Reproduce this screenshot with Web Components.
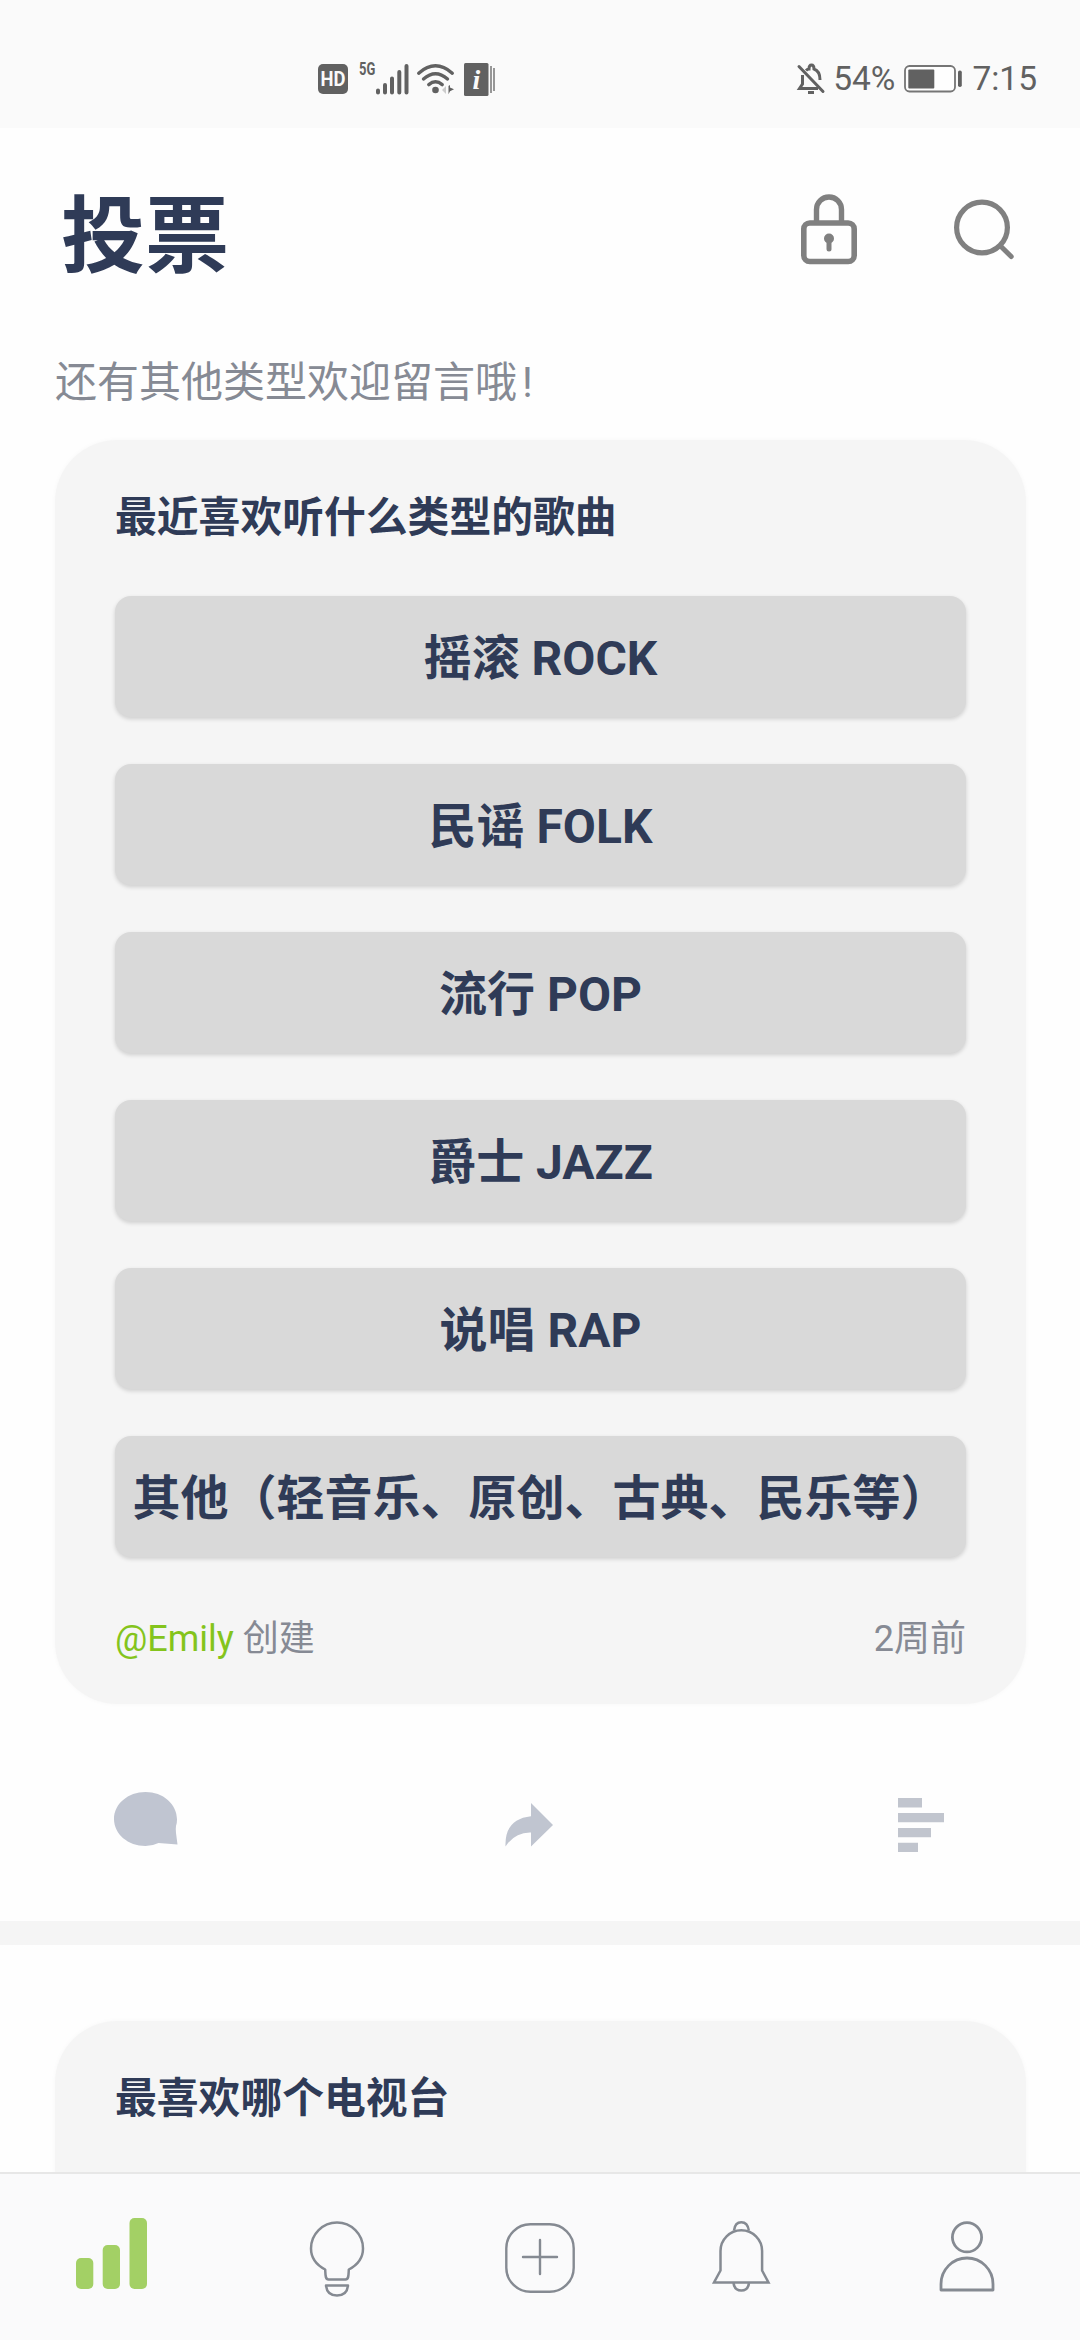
<!DOCTYPE html>
<html lang="zh-CN">
<head>
<meta charset="utf-8">
<title>投票</title>
<style>
  html, body { margin: 0; padding: 0; }
  body {
    width: 1080px; height: 2340px; overflow: hidden; background: #fefefe;
    font-family: Roboto, "Noto Sans CJK SC", sans-serif;
    --ink: #2f3b57; --muted: #868a94; --panel: #f5f5f5; --accent: #84c41c;
  }
</style>
</head>
<body>
<poll-app></poll-app>
<script>
const define = (name, html) => {
  const template = document.createElement('template');
  template.innerHTML = html;
  customElements.define(name, class extends HTMLElement {
    constructor() {
      super();
      this.attachShadow({ mode: 'open' }).append(template.content.cloneNode(true));
    }
  });
};

/* name: [width, height, markup] */
const ICONS = {
  hd: [30, 30, `<rect width="30" height="30" rx="5" fill="#616161"/><text x="15" y="22" text-anchor="middle" textLength="25" lengthAdjust="spacingAndGlyphs" font-family="Roboto" font-weight="700" font-size="19.500" fill="#fafafa">HD</text>`],
  signal: [34, 32, `<g stroke="#616161" stroke-width="4" stroke-linecap="round"><path d="M3 27.500v2M10 22v7.500M17 15.500v14M24.300 9v20.500M31.500 3v26.500"/></g>`],
  wifi: [40, 34, `<g fill="none" stroke="#616161" stroke-width="3.400" stroke-linecap="round"><path d="M2.700 11.200Q19.500-3.500 36.300 11.200M7.500 17Q19.500 6.500 31.500 17M12.800 22.600Q19.500 17 26.200 22.600"/></g><circle cx="19.500" cy="28" r="3.300" fill="#616161"/><path d="M30 24v8l-4-4z" fill="#ccc"/><path d="M32.500 24l1.500-1v2.500l4 1.800-4 2-1.500 3z" fill="#616161"/>`],
  info: [31, 33, `<rect width="24.500" height="33" rx="1.500" fill="#616161"/><path d="M27 3v27M30 5v23" stroke="#777" stroke-width="1.500"/><text x="12.300" y="25.500" text-anchor="middle" font-family="Liberation Serif" font-weight="700" font-style="italic" font-size="28" fill="#fafafa">i</text>`],
  mute: [28, 32, `<g fill="none" stroke="#616161" stroke-width="3"><path d="M2 3.500L26 28.500" stroke-linecap="round"/><path d="M9 7.500Q10.500 6 12 6Q12 2 14.500 2T17 6Q23 8 23 17M5.500 12V21L2.500 25.500H21"/><path d="M11 29.500h6"/></g>`],
  battery: [59, 28, `<rect x="1" y="1" width="50" height="25.500" rx="4.500" fill="#fefefe" stroke="#757575" stroke-width="1.800"/><rect x="4.300" y="4.500" width="26" height="19" rx="1" fill="#616161"/><rect x="54" y="5.500" width="3.800" height="16.500" rx="1.800" fill="#616161"/>`],
  lock: [56, 70, `<g fill="none" stroke="#808080"><rect x="2.800" y="29" width="50.400" height="38.500" rx="6" stroke-width="5.600"/><path d="M15.500 28V15.500a12.500 12.500 0 0 1 25 0V28" stroke-width="5.400"/></g><circle cx="28" cy="44.500" r="5" fill="#808080"/><path d="M28 45v10" stroke="#808080" stroke-width="5" stroke-linecap="round"/>`],
  search: [60, 60, `<g fill="none" stroke="#808080"><circle cx="28" cy="28.500" r="25.400" stroke-width="5.200"/><path d="M46.500 47L57.200 57.500" stroke-width="5" stroke-linecap="round"/></g>`],
  comment: [64, 54, `<path d="M31.500 0C49 0 63 12 63 27.500Q63 31.500 62 34Q61.500 37 62 41L63.500 52.500L44.500 51Q38.500 54 31.500 54C14 54 0 42 0 27S14 0 31.500 0z" fill="#c0c5d1"/>`],
  share: [48, 44, `<path d="M26 0L48 22 26 43.500V29.500Q10 29 .500 43.500Q-.500 16 26 13.200z" fill="#c0c5d0"/>`],
  list: [46, 54, `<path d="M0 0h24v9.500H0zM0 15h46v9.200H0zM0 30h33v9.200H0zM0 44.800h20V54H0z" fill="#c1c5ce"/>`],
  chart: [71, 71, `<g fill="#a3d065"><rect y="40" width="17.300" height="31" rx="5"/><rect x="26.700" y="27" width="17.300" height="44" rx="5"/><rect x="53.500" y="0" width="17.500" height="71" rx="5"/></g>`],
  bulb: [56, 76, `<g fill="none" stroke="#858a92" stroke-width="2.500" stroke-linejoin="round"><path d="M16.200 48.500C8.500 44.500 2 37.500 2 27.500a26 26 0 0 1 52 0C54 37.500 47.500 44.500 39.800 48.500C39.500 53 40 58.500 36.500 58.500H19.500C16 58.500 16.500 53 16.200 48.500z"/><path d="M17 64.500H39Q38 74.500 28 74.500T17 64.500z"/></g>`],
  plus: [70, 70, `<g fill="none" stroke="#858a92" stroke-width="2.400"><rect x="1.300" y="1.300" width="67.400" height="67.400" rx="24"/><path d="M18 34H52M35 17V51" stroke-linecap="round"/></g>`],
  bell: [58, 71, `<g fill="none" stroke="#858a92" stroke-width="2.500"><path d="M8.500 30a20.800 20.800 0 0 1 41.600 0V49.500L56.500 61.500H2L8.500 49.500z"/><path d="M22 9.500Q23 1.300 29.300 1.300T36.800 9.500M21.500 62Q22.500 69.500 29.300 69.500T37 62"/></g>`],
  person: [56, 71, `<g fill="none" stroke="#858a92" stroke-width="2.800" stroke-linejoin="round"><circle cx="28" cy="16.300" r="14.600"/><path d="M2 69V63a26 26 0 0 1 52 0V69z"/></g>`]
};

customElements.define('app-icon', class extends HTMLElement {
  constructor() {
    super();
    this.attachShadow({ mode: 'open' });
  }
  connectedCallback() {
    const [w, h, body] = ICONS[this.getAttribute('name')];
    this.shadowRoot.innerHTML = `<style>:host{display:block;flex:none}svg{display:block;overflow:visible}</style>
      <svg width="${w}" height="${h}" viewBox="0 0 ${w} ${h}" aria-hidden="true">${body}</svg>`;
  }
});

define('status-bar', `<style>
  :host { display: flex; justify-content: space-between; align-items: center; box-sizing: border-box; flex: none;
    height: 128px; padding: 30px 43px 0 318px; background: #fafafa; color: #616161; }
  .group { display: flex; align-items: center; }
  .net { font: 700 18px/14px Roboto, sans-serif; align-self: flex-start;
    transform: scaleX(.72); transform-origin: left; width: 16px; margin: 0 0 0 11px; }
  .value { font-size: 33.500px; line-height: 36px; }
</style>
<div class="group"><app-icon name="hd"></app-icon><span class="net">5G</span><app-icon name="signal"></app-icon>
<app-icon name="wifi" style="margin-left:7px"></app-icon><app-icon name="info" style="margin-left:8px"></app-icon></div>
<div class="group"><app-icon name="mute"></app-icon><span class="value" style="margin-left:8px">54%</span>
<app-icon name="battery" style="margin-left:9px"></app-icon><span class="value" style="margin-left:9px">7:15</span></div>`);

define('page-header', `<style>
  :host { display: flex; align-items: center; box-sizing: border-box; flex: none; height: 202px; padding: 0 66px 0 61px; }
  h1 { flex: 1; margin: 0; padding-top: 18px; font-size: 84px; line-height: 100px; font-weight: 700; color: var(--ink); }
  .tools { display: flex; align-items: center; gap: 97px; }
</style><h1><slot></slot></h1><div class="tools"><app-icon name="lock"></app-icon><app-icon name="search"></app-icon></div>`);

define('poll-note', `<style>
  :host { display: block; margin: 23px 55px 27px; font-size: 42px; line-height: 60px; color: var(--muted); white-space: nowrap; }
</style><slot></slot>`);

define('poll-card', `<style>
  :host { display: block; margin: 0 54px 0 55px; padding: 48px 60px 35px; border-radius: 62px; background: var(--panel); box-shadow: 0 0 5px #f8f8f8; }
  h2 { margin: 0; font-size: 41.800px; line-height: 60px; font-weight: 700; color: var(--ink); white-space: nowrap; }
  .options { display: flex; flex-direction: column; gap: 47px; margin-top: 48px; }
  .meta { display: flex; justify-content: space-between; margin-top: 52px; font-size: 36px; line-height: 60px; color: var(--muted); }
</style><h2><slot name="question"></slot></h2><div class="options"><slot></slot></div>
<div class="meta"><slot name="author"></slot><slot name="time"></slot></div>`);

define('poll-option', `<style>
  :host { display: flex; justify-content: center; align-items: center; height: 121px; box-sizing: border-box; padding-top: 4px;
    border-radius: 16px; background: #d9d9d9; box-shadow: 0 2px 4px rgba(0,0,0,.16);
    font-size: 48px; font-weight: 700; line-height: 60px; color: var(--ink); white-space: nowrap; }
</style><span><slot></slot></span>`);

define('poll-actions', `<style>
  :host { display: flex; justify-content: space-between; height: 217px; box-sizing: border-box; padding: 88px 136px 0 114px; }
</style><app-icon name="comment"></app-icon><app-icon name="share" style="padding:11px 18px 0 0"></app-icon><app-icon name="list" style="padding-top:6px"></app-icon>`);

define('feed-divider', `<style>:host { display: block; height: 24px; margin-bottom: 76px; background: var(--panel); }</style>`);

define('tab-bar', `<style>
  :host { display: grid; grid-template-columns: 223px 228px 178px 224px 227px; justify-items: center; flex: none;
    box-sizing: border-box; height: 168px; padding-top: 44px; border-top: 2px solid #e7e7e7; background: #fafafb; }
  app-icon { margin-top: 3px; }
</style><app-icon name="chart" style="margin-top:0"></app-icon><app-icon name="bulb"></app-icon>
<app-icon name="plus" style="margin-top:5px"></app-icon><app-icon name="bell"></app-icon><app-icon name="person"></app-icon>`);

define('poll-app', `<style>
  :host { display: flex; flex-direction: column; height: 2340px; }
  main { flex: 1; min-height: 0; overflow: hidden; display: flow-root; }
  b { font-weight: 400; color: var(--accent); }
  .mark { margin-left: 5px; }
</style>
<status-bar></status-bar>
<page-header>投票</page-header>
<main>
  <poll-note>还有其他类型欢迎留言哦<span class="mark">!</span></poll-note>
  <poll-card>
    <span slot="question">最近喜欢听什么类型的歌曲</span>
    <poll-option>摇滚 ROCK</poll-option>
    <poll-option>民谣 FOLK</poll-option>
    <poll-option>流行 POP</poll-option>
    <poll-option>爵士 JAZZ</poll-option>
    <poll-option>说唱 RAP</poll-option>
    <poll-option>其他（轻音乐、原创、古典、民乐等）</poll-option>
    <span slot="author"><b>@Emily</b> 创建</span>
    <span slot="time">2周前</span>
  </poll-card>
  <poll-actions></poll-actions>
  <feed-divider></feed-divider>
  <poll-card><span slot="question">最喜欢哪个电视台</span></poll-card>
</main>
<tab-bar></tab-bar>`);
</script>
</body>
</html>
